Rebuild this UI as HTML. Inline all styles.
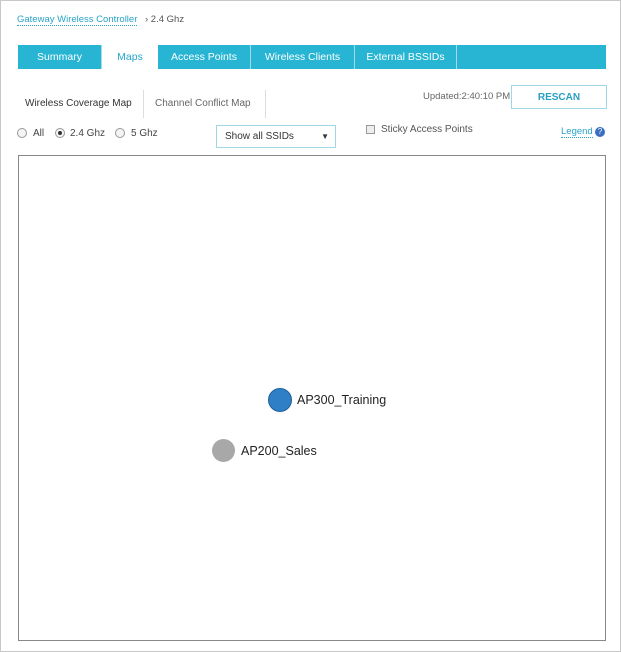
<!DOCTYPE html><html><head><style>
body{margin:0;width:621px;height:652px;background:#fff;font-family:"Liberation Sans",sans-serif;position:relative;overflow:hidden;}
.frame{position:absolute;left:0;top:0;width:619px;height:650px;border:1px solid #c8c8c8;}
.a{position:absolute;white-space:nowrap;}
.tabs{position:absolute;left:18px;top:45px;width:588px;height:24px;background:#27b5d3;}
.tab{position:absolute;top:0;height:24px;line-height:24px;color:#fff;font-size:10.5px;text-align:center;border-right:1px solid #9fdbe9;box-sizing:border-box;}
.radio{position:absolute;width:8px;height:8px;border:1px solid #999;border-radius:50%;background:#f4f4f4;}
</style></head><body><div class="frame"></div>
<div class="a" style="left:17px;top:14px;font-size:9.5px;color:#2aa3c7;border-bottom:1px dotted #2aa3c7;">Gateway Wireless Controller</div>
<div class="a" style="left:145px;top:14px;font-size:9.5px;color:#555;">› 2.4 Ghz</div>
<div class="tabs">
<div class="tab" style="left:0;width:84px;">Summary</div>
<div class="tab" style="left:84px;width:56px;background:#fff;color:#27a5c9;height:25px;border:none;">Maps</div>
<div class="tab" style="left:140px;width:93px;">Access Points</div>
<div class="tab" style="left:233px;width:104px;">Wireless Clients</div>
<div class="tab" style="left:337px;width:102px;">External BSSIDs</div>
</div>
<div class="a" style="left:25px;top:98px;font-size:10px;color:#333;">Wireless Coverage Map</div>
<div class="a" style="left:143px;top:90px;width:1px;height:28px;background:#ddd;"></div>
<div class="a" style="left:155px;top:98px;font-size:10px;color:#666;">Channel Conflict Map</div>
<div class="a" style="left:265px;top:90px;width:1px;height:28px;background:#ddd;"></div>
<div class="a" style="left:423px;top:91px;font-size:9.5px;color:#666;">Updated:2:40:10 PM</div>
<div class="a" style="left:511px;top:85px;width:94px;height:22px;border:1px solid #9fd7e6;background:#fff;color:#2a9fc4;font-size:10px;font-weight:bold;text-align:center;line-height:24px;">RESCAN</div>
<div class="radio" style="left:17px;top:128px;"></div><div class="a" style="left:33px;top:128px;font-size:10px;color:#444;">All</div>
<div class="radio" style="left:55px;top:128px;"><div style="position:absolute;left:2px;top:2px;width:4px;height:4px;border-radius:50%;background:#333;"></div></div><div class="a" style="left:70px;top:128px;font-size:10px;color:#444;">2.4 Ghz</div>
<div class="radio" style="left:115px;top:128px;"></div><div class="a" style="left:131px;top:128px;font-size:10px;color:#444;">5 Ghz</div>
<div class="a" style="left:216px;top:125px;width:118px;height:21px;border:1px solid #9fd7e6;font-size:10px;color:#333;line-height:21px;"><span style="margin-left:8px;">Show all SSIDs</span><span style="position:absolute;right:6px;font-size:8px;">▼</span></div>
<div class="a" style="left:366px;top:125px;width:7px;height:7px;border:1px solid #999;background:#eee;"></div>
<div class="a" style="left:381px;top:124px;font-size:10px;color:#555;">Sticky Access Points</div>
<div class="a" style="left:561px;top:126px;font-size:9.5px;color:#2aa3c7;border-bottom:1px dotted #2aa3c7;">Legend</div>
<div class="a" style="left:595px;top:127px;width:10px;height:10px;border-radius:50%;background:#3a6fc0;color:#fff;font-size:8px;text-align:center;line-height:10px;">?</div>
<div class="a" style="left:18px;top:155px;width:586px;height:484px;border:1px solid #888;"></div>
<div class="a" style="left:268px;top:388px;width:22px;height:22px;border-radius:50%;background:#2f7fc6;border:1px solid #1d5f9e;"></div>
<div class="a" style="left:297px;top:393px;font-size:12.5px;color:#222;">AP300_Training</div>
<div class="a" style="left:212px;top:439px;width:23px;height:23px;border-radius:50%;background:#a8a8a8;"></div>
<div class="a" style="left:241px;top:444px;font-size:12.5px;color:#222;">AP200_Sales</div>
</body></html>
